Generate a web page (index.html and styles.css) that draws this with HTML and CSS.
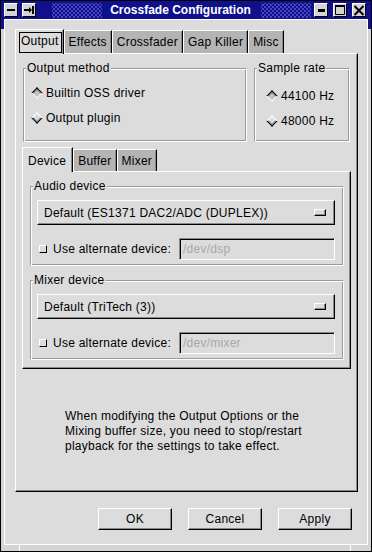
FILE: index.html
```html
<!DOCTYPE html>
<html lang="en">
<head>
    <meta charset="UTF-8">
    <meta name="viewport" content="width=device-width, initial-scale=1.0">
    <title>Crossfade Configuration</title>
    <link rel="stylesheet" href="styles.css">
</head>
<body>
    <div class="window">
        <div class="titlebar">
            <span class="tb-btn">
                <svg viewBox="0 0 12 12"><rect x="2" y="5" width="8" height="2"/></svg>
            </span>
            <span class="tb-btn">
                <svg viewBox="0 0 12 12"><rect x="1" y="5" width="5" height="2"/><polygon points="6,3 9,6 6,9"/><rect x="9" y="2" width="2" height="8"/></svg>
            </span>
            <span class="dots dots-left"></span>
            <span class="title">Crossfade Configuration</span>
            <span class="dots"></span>
            <span class="tb-right">
                <span class="tb-btn">
                    <svg viewBox="0 0 12 12"><rect x="3" y="5" width="7" height="3"/></svg>
                </span>
                <span class="tb-btn">
                    <svg viewBox="0 0 12 12"><rect x="1" y="1" width="10" height="2"/><path d="M1.5 2.5v8h9v-8" fill="none" stroke="#000"/></svg>
                </span>
                <span class="tb-btn">
                    <svg viewBox="0 0 12 12"><path d="M1.5 2l9 9M10.5 2l-9 9" stroke="#000" stroke-width="2"/></svg>
                </span>
            </span>
        </div>

        <div class="client">
            <div class="notebook">
                <div class="tabs">
                    <div class="tab active"><span class="focus">Output</span></div>
                    <div class="tab">Effects</div>
                    <div class="tab">Crossfader</div>
                    <div class="tab">Gap Killer</div>
                    <div class="tab">Misc</div>
                </div>
                <div class="page">
                    <div class="frames">
                        <fieldset class="frame method">
                            <legend>Output method</legend>
                            <div class="radios">
                                <div class="radio"><span class="diamond on"></span>Builtin OSS driver</div>
                                <div class="radio"><span class="diamond"></span>Output plugin</div>
                            </div>
                        </fieldset>
                        <fieldset class="frame rate">
                            <legend>Sample rate</legend>
                            <div class="radios">
                                <div class="radio"><span class="diamond on"></span>44100 Hz</div>
                                <div class="radio"><span class="diamond"></span>48000 Hz</div>
                            </div>
                        </fieldset>
                    </div>

                    <div class="notebook inner">
                        <div class="tabs">
                            <div class="tab active">Device</div>
                            <div class="tab">Buffer</div>
                            <div class="tab">Mixer</div>
                        </div>
                        <div class="page">
                            <fieldset class="frame device">
                                <legend>Audio device</legend>
                                <div class="device-body">
                                    <div class="optmenu">
                                        <span>Default (ES1371 DAC2/ADC (DUPLEX))</span>
                                        <span class="indicator"></span>
                                    </div>
                                    <div class="alt-row">
                                        <span class="check"></span>
                                        <span>Use alternate device:</span>
                                        <div class="entry">/dev/dsp</div>
                                    </div>
                                </div>
                            </fieldset>
                            <fieldset class="frame device">
                                <legend>Mixer device</legend>
                                <div class="device-body">
                                    <div class="optmenu">
                                        <span>Default (TriTech (3))</span>
                                        <span class="indicator"></span>
                                    </div>
                                    <div class="alt-row">
                                        <span class="check"></span>
                                        <span>Use alternate device:</span>
                                        <div class="entry">/dev/mixer</div>
                                    </div>
                                </div>
                            </fieldset>
                        </div>
                    </div>

                    <p class="note">When modifying the Output Options or the<br>Mixing buffer size, you need to stop/restart<br>playback for the settings to take effect.</p>
                </div>
            </div>

            <div class="buttons">
                <button type="button" class="btn">OK</button>
                <button type="button" class="btn">Cancel</button>
                <button type="button" class="btn">Apply</button>
            </div>
        </div>
    </div>
</body>
</html>
```

FILE: styles.css
```css
* {
    box-sizing: border-box;
}
body {
    margin: 0;
    font-family: "Liberation Sans", Arial, sans-serif;
    font-size: 12px;
    line-height: 14px;
    letter-spacing: 0.25px;
    color: #000;
    background: #000;
}
.window {
    width: 372px;
    height: 552px;
    border: 1px solid #000;
    display: flex;
    flex-direction: column;
    background:
        linear-gradient(#fff, #fff) 18px 100% / 1px 6px no-repeat,
        linear-gradient(#fff, #fff) 349px 100% / 1px 6px no-repeat,
        linear-gradient(#10108c 0 28px, #d4d4d4 28px);
}

/* title bar */
.titlebar {
    height: 18px;
    flex: none;
    display: flex;
    align-items: center;
    padding: 0 5px 0 3px;
    background: #10108c;
}
.tb-btn {
    width: 14px;
    height: 14px;
    flex: none;
    display: flex;
    background: #d4d4d4;
    border: 1px solid;
    border-color: #fff #000 #000 #fff;
}
.tb-btn + .tb-btn {
    margin-left: 4px;
}
.tb-btn svg {
    width: 12px;
    height: 12px;
    fill: #000;
}
.tb-right {
    display: flex;
    margin-left: 3px;
}
.tb-right .tb-btn + .tb-btn {
    margin-left: 5px;
}
.dots {
    flex: 1;
    height: 15px;
    background-image:
        radial-gradient(circle, #4848c0 0.7px, transparent 1px),
        radial-gradient(circle, #4848c0 0.7px, transparent 1px);
    background-size: 4px 4px;
    background-position: 0 0, 2px 2px;
}
.dots-left {
    margin-left: 16px;
}
.title {
    color: #fff;
    font-weight: bold;
    letter-spacing: 0;
    margin: 0 10px 0 8px;
    white-space: nowrap;
}

/* client area */
.client {
    flex: 1;
    margin: 0 3px 6px;
    border: 1px solid #fff;
    background: #dcdcdc;
    display: flex;
    flex-direction: column;
    padding: 9px 9px 14px 10px;
}
.notebook {
    display: flex;
    flex-direction: column;
}
.client > .notebook {
    flex: 1;
}
.tabs {
    display: flex;
    align-items: flex-end;
}
.tab {
    background: #b4b4b4;
    border: 1px solid;
    border-color: #fff #000 #000 #fff;
    border-bottom: 0;
    box-shadow: inset -1px 0 0 #8a8a8a;
    padding: 4px 4px;
    white-space: nowrap;
}
.tab.active {
    background: #dcdcdc;
    padding: 2px 1px 1px 3px;
    margin-bottom: -1px;
    z-index: 1;
}
.focus {
    display: block;
    border: 1px solid #000;
    padding: 1px 2px 4px 1px;
}
.page {
    flex: 1;
    border: 1px solid;
    border-color: #fff #000 #000 #fff;
    box-shadow: inset -1px -1px 0 #8a8a8a;
    padding: 7px;
    display: flex;
    flex-direction: column;
}

/* frames */
.frames {
    display: flex;
    gap: 7px;
}
.frame {
    margin: 0;
    padding: 0;
    min-width: 0;
    border: 1px solid;
    border-color: #9a9a9a #fff #fff #9a9a9a;
    box-shadow: inset 1px 1px 0 #fff, inset -1px -1px 0 #9a9a9a;
}
.frame legend {
    margin-left: 2px;
    padding: 0 1px;
    background: #dcdcdc;
}
.method {
    flex: 1;
}
.rate {
    flex: none;
    width: 96px;
}
.radios {
    display: flex;
    flex-direction: column;
    gap: 11px;
}
.method .radios {
    padding: 11px 0 16px 9px;
}
.rate .radios {
    padding: 14px 0 13px 13px;
}
.radio {
    display: flex;
    align-items: center;
    gap: 5px;
    height: 14px;
}
.diamond {
    width: 8px;
    height: 8px;
    flex: none;
    transform: rotate(45deg);
    border: 1px solid;
    border-color: #fff #000 #000 #fff;
    background: #dcdcdc;
    box-shadow: inset -1px -1px 0 #8a8a8a;
}
.diamond.on {
    border-color: #000 #fff #fff #000;
    background: #c4c4c4;
    box-shadow: inset 1px 1px 0 #8a8a8a;
}

/* inner notebook */
.inner {
    margin: 5px -1px 0;
}
.inner .tab {
    padding: 4px 4px 3px;
}
.inner .tab.active {
    padding: 6px 6px 4px 5px;
}
.inner .page {
    flex: none;
    padding: 7px 6px 8px 7px;
    gap: 7px;
}
.device-body {
    padding: 7px 8px 5px 6px;
}
.optmenu {
    height: 25px;
    display: flex;
    align-items: center;
    justify-content: space-between;
    padding: 0 8px 0 6px;
    border: 1px solid;
    border-color: #fff #000 #000 #fff;
    box-shadow: inset -1px -1px 0 #8a8a8a;
    white-space: nowrap;
}
.indicator {
    width: 12px;
    height: 7px;
    border: 1px solid;
    border-color: #fff #000 #000 #fff;
    box-shadow: inset -1px -1px 0 #8a8a8a;
}
.alt-row {
    display: flex;
    align-items: center;
    margin-top: 13px;
    padding-left: 2px;
    white-space: nowrap;
}
.check {
    width: 8px;
    height: 8px;
    flex: none;
    margin-right: 6px;
    border: 1px solid;
    border-color: #fff #000 #000 #fff;
}
.entry {
    flex: 1;
    height: 22px;
    margin-left: 8px;
    padding: 3px 0 0 3px;
    border: 1px solid;
    border-color: #8a8a8a #fff #fff #8a8a8a;
    box-shadow: inset 1px 1px 0 #000;
    color: #a8a8a8;
}

.note {
    margin: 40px 0 0 42px;
    line-height: 15px;
}

/* dialog buttons */
.buttons {
    display: flex;
    justify-content: flex-end;
    gap: 16px;
    margin-top: 16px;
    padding-right: 6px;
}
.btn {
    width: 74px;
    height: 22px;
    padding: 0;
    font: inherit;
    letter-spacing: inherit;
    color: #000;
    background: #dcdcdc;
    border: 1px solid;
    border-color: #fff #000 #000 #fff;
    box-shadow: inset -1px -1px 0 #8a8a8a;
}
```
